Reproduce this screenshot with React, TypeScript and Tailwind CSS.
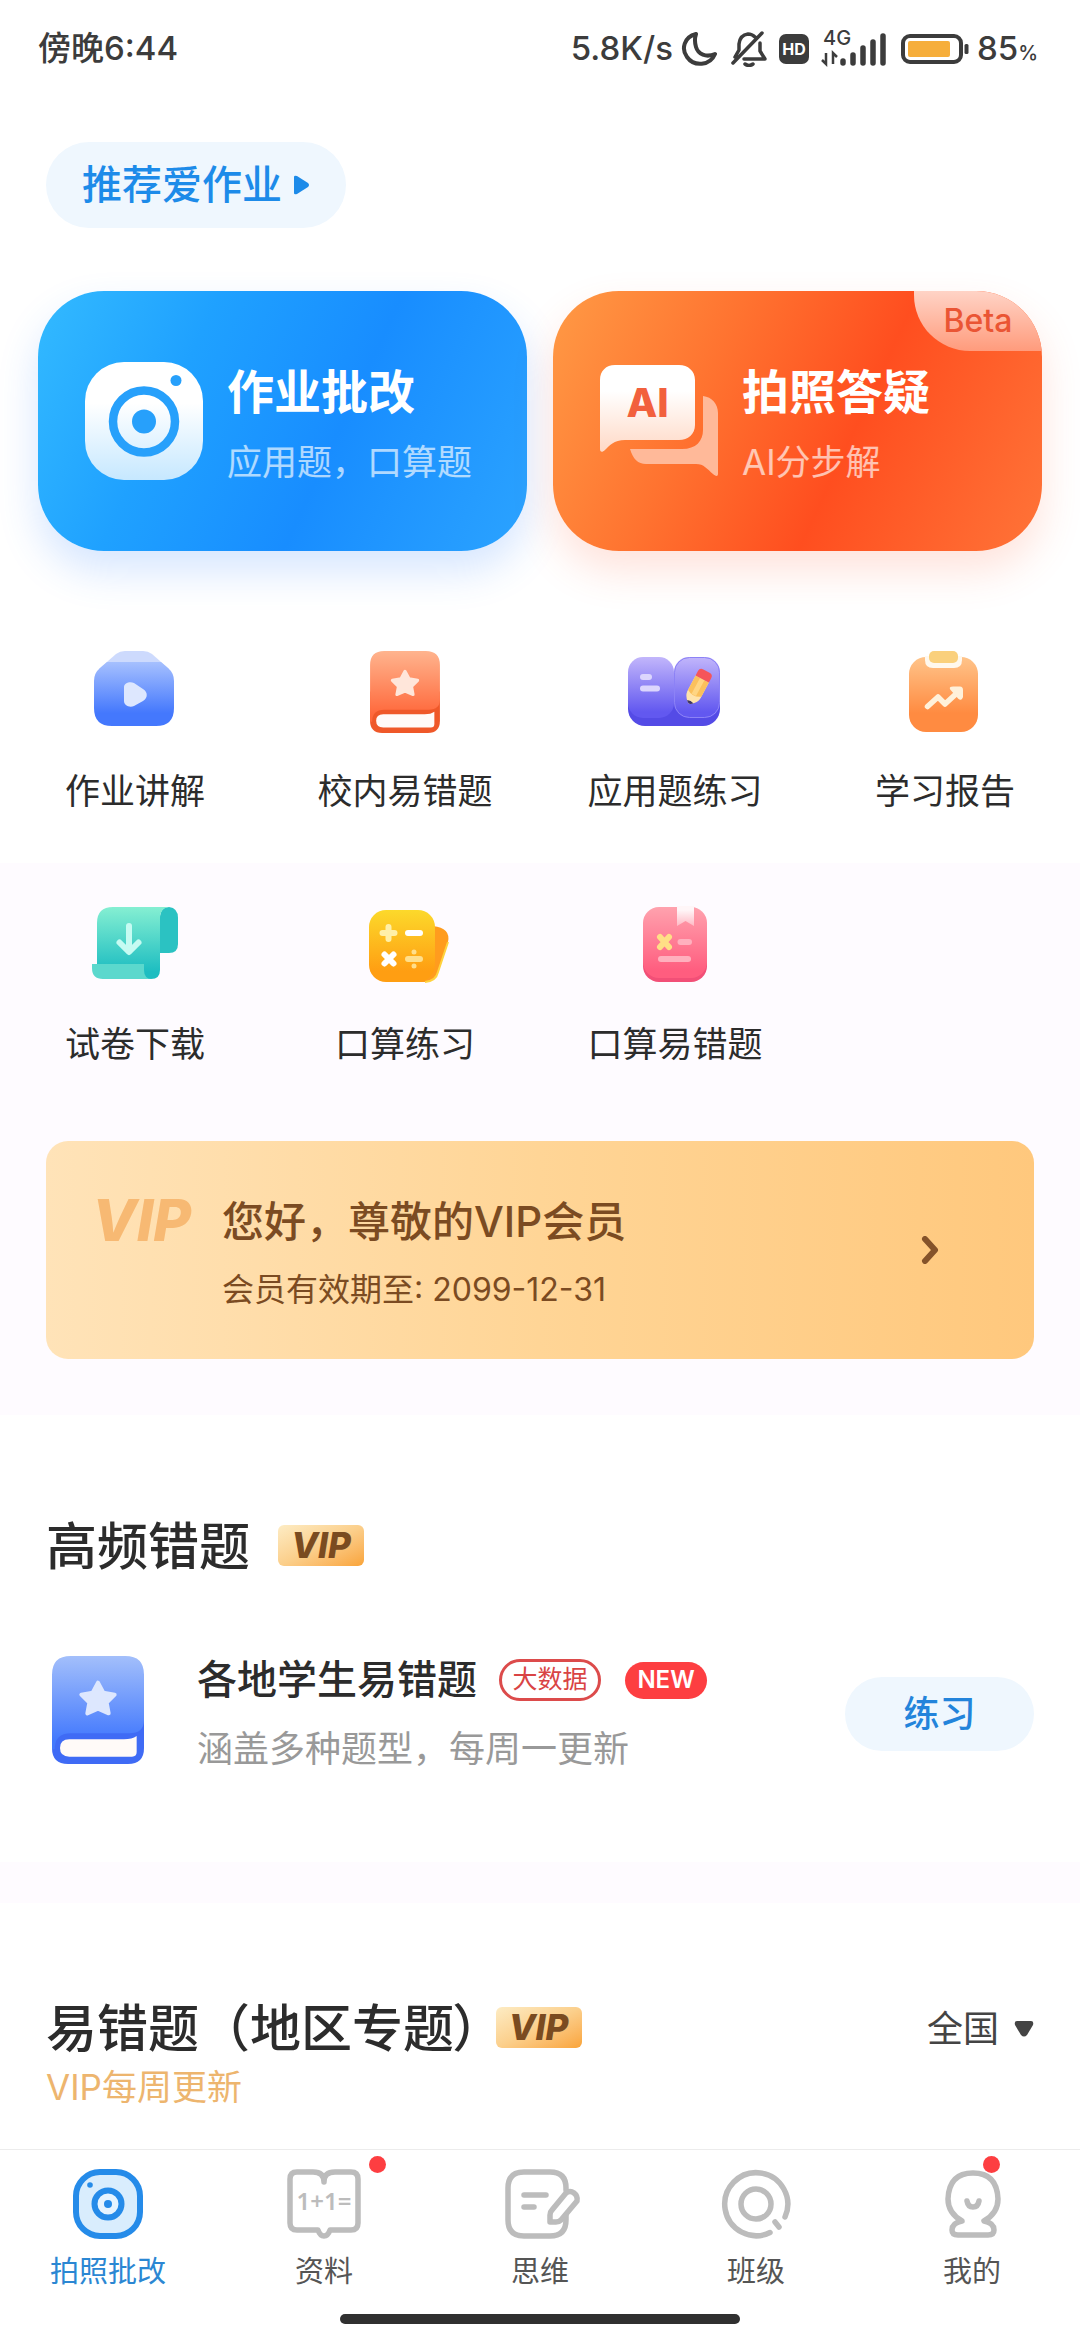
import { ReactNode } from "react";

function CameraIcon() {
  return (
    <svg className="w-[118px] h-[118px] shrink-0" viewBox="0 0 118 118">
      <defs>
        <linearGradient id="cam" x1="0" y1="0" x2="0" y2="1">
          <stop offset="0.35" stopColor="#ffffff" />
          <stop offset="1" stopColor="#c6e8ff" />
        </linearGradient>
      </defs>
      <rect width="118" height="118" rx="39" fill="url(#cam)" />
      <circle cx="59" cy="59.5" r="31" fill="none" stroke="#27a0fb" strokeWidth="8.5" />
      <circle cx="59" cy="59.5" r="12" fill="#27a0fb" />
      <circle cx="91" cy="18.5" r="5.5" fill="#27a0fb" />
    </svg>
  );
}

function AiIcon() {
  return (
    <svg className="w-[118px] h-[118px] shrink-0" viewBox="0 0 118 118">
      <defs>
        <linearGradient id="bubble" x1="0" y1="0" x2="0" y2="1">
          <stop offset="0.3" stopColor="#ffffff" />
          <stop offset="1" stopColor="#ffd9c6" />
        </linearGradient>
      </defs>
      <path d="M103 34C112 35 118 42 118 51V112C118 115 115 114 113 112C107 107 104 102 96 102H46C38 102 33 97 30 87H82C96 87 103 79 103 68Z" fill="#ffb999" />
      <path d="M15 3H79C88 3 95 9 95 18V63C95 72 88 78 79 78H25C14 78 9 84 5 88C2 91 0 90 0 87V18C0 9 6 3 15 3Z" fill="url(#bubble)" />
      <text x="47.5" y="55" textAnchor="middle" fontFamily="Inter" fontSize="40" fontWeight="800" fill="#f2603d">AI</text>
    </svg>
  );
}

function LessonIcon() {
  return (
    <svg className="w-24 h-[82px]" viewBox="0 0 96 82">
      <defs>
        <linearGradient id="lesson" x1="0" y1="0" x2="0" y2="1">
          <stop offset="0" stopColor="#a6c0fe" />
          <stop offset="0.8" stopColor="#4478fd" />
        </linearGradient>
      </defs>
      <path d="M29 3Q33 0 38 0H56Q61 0 65 3L82 18H12Z" fill="#cddafd" />
      <path d="M20 11H74L81 17Q87 22 87 30V57Q87 75 69 75H25Q7 75 7 57V30Q7 22 13 17Z" fill="url(#lesson)" />
      <path d="M37 36C37 32 43 30 47 32L56 38C61 41 61 47 56 50L47 55C42 57 37 54 37 50Z" fill="#dde7fe" />
    </svg>
  );
}

interface BookIconProps {
  id: string;
  className: string;
  top: string;
  bottom: string;
  edge: string;
  star: string;
}

function BookIcon({ id, className, top, bottom, edge, star }: BookIconProps) {
  return (
    <svg className={className} viewBox="0 0 69 81">
      <defs>
        <linearGradient id={id} x1="0" y1="0" x2="0" y2="1">
          <stop offset="0" stopColor={top} />
          <stop offset="0.9" stopColor={bottom} />
        </linearGradient>
      </defs>
      <path d="M0 66V40H69V69Q69 81 57 81H12Q0 81 0 69Z" fill={edge} />
      <path d="M14 0H55Q69 0 69 14V48Q69 58 58 58H14Q2 58 2 70H0V14Q0 0 14 0Z" fill={`url(#${id})`} />
      <path d="M13 62.500H54Q60 62.500 63.500 60V72Q63.500 75.500 60 75.500H13Q6 75.500 6 69T13 62.500Z" fill="#fffaf8" />
      <path d="M34.500 20L38.500 27.500L47 29L41 35L42.500 43L34.500 39.500L26.500 43L28 35L22 29L30.500 27.500Z" fill={star} stroke={star} strokeWidth="3" strokeLinejoin="round" />
    </svg>
  );
}

function ExerciseIcon() {
  return (
    <svg className="w-24 h-[82px]" viewBox="0 0 96 82">
      <defs>
        <linearGradient id="exercise" x1="0" y1="0" x2="0" y2="1">
          <stop offset="0" stopColor="#c2b6fb" />
          <stop offset="0.9" stopColor="#6258f0" />
        </linearGradient>
      </defs>
      <rect x="1" y="24" width="92" height="51" rx="17" fill="#544be6" />
      <rect x="1" y="6" width="46" height="61" rx="15" fill="url(#exercise)" />
      <rect x="47" y="6" width="46" height="61" rx="15" fill="url(#exercise)" />
      <rect x="47.500" y="6.500" width="45" height="60" rx="15" fill="none" stroke="#8c82f6" strokeWidth="1" />
      <rect x="13" y="23" width="12" height="6" rx="3" fill="#dcd6fd" />
      <rect x="13" y="34.500" width="20" height="6" rx="3" fill="#dcd6fd" />
      <g transform="translate(71 36) rotate(28)">
        <path d="M-7.500 -9V9Q-7 14 -2 18Q0 20 2 18Q7 14 7.500 9V-9Z" fill="#ffe3ac" />
        <path d="M-7.500 -9V7Q0 12 7.500 7V-9Z" fill="#fbc05c" />
        <path d="M-2.500 -9V9H2.500V-9Z" fill="#ffd583" />
        <path d="M-3.500 16.500Q0 21 3.500 16.500Q0 15 -3.500 16.500Z" fill="#3c3566" />
        <path d="M-7.500 -9V-14Q-7.500 -18 -3.500 -18H3.500Q7.500 -18 7.500 -14V-9Z" fill="#f5555a" />
      </g>
    </svg>
  );
}

function ReportIcon() {
  return (
    <svg className="w-24 h-[82px]" viewBox="0 0 96 82">
      <defs>
        <linearGradient id="report" x1="0" y1="0" x2="0" y2="1">
          <stop offset="0" stopColor="#ffc48a" />
          <stop offset="0.75" stopColor="#ff8b41" />
        </linearGradient>
      </defs>
      <rect x="12" y="6" width="69" height="75" rx="17" fill="url(#report)" />
      <path d="M28 5H65V9Q65 17 57 17H36Q28 17 28 9Z" fill="#fff8ee" />
      <rect x="32" y="0" width="29" height="12" rx="5" fill="#fad07c" />
      <path d="M30.500 55.500L41 46L48 53L60 42" fill="none" stroke="#fff1da" strokeWidth="5.500" strokeLinecap="round" strokeLinejoin="round" />
      <path d="M54 38Q53 36.500 56 36.500H63Q65 36.500 65 39V46Q64 49 62 47Z" fill="#fff1da" stroke="#fff1da" strokeWidth="2" />
    </svg>
  );
}

function DownloadIcon() {
  return (
    <svg className="w-24 h-[82px]" viewBox="0 0 96 82">
      <defs>
        <linearGradient id="paper" x1="0" y1="0" x2="0" y2="1">
          <stop offset="0" stopColor="#85efd2" />
          <stop offset="0.9" stopColor="#1dbdc1" />
        </linearGradient>
      </defs>
      <path d="M73 12Q74 3 82 3Q91 4 91 14V40Q91 49 82 49H73Z" fill="#2bc2c2" />
      <path d="M26 3H82Q73 4 73 14V66Q73 75 64 75H20Q10 75 10 66V19Q10 3 26 3Z" fill="url(#paper)" />
      <path d="M5 60H57V66Q57 75 65 75H16Q5 75 5 64Z" fill="#5bd8cd" />
      <path d="M42 22V46M32.500 38.500L42 48L51.500 38.500" fill="none" stroke="#c6fbf2" strokeWidth="6" strokeLinecap="round" strokeLinejoin="round" />
    </svg>
  );
}

function CalcIcon() {
  return (
    <svg className="w-24 h-[82px]" viewBox="0 0 96 82">
      <defs>
        <linearGradient id="calc" x1="0" y1="0" x2="0" y2="1">
          <stop offset="0" stopColor="#fcd92b" />
          <stop offset="0.85" stopColor="#ff9e12" />
        </linearGradient>
      </defs>
      <path d="M76 22Q94 24 91 38L81 68Q79 77 68 78H50V22Z" fill="#ff9c1e" />
      <path d="M91 38L81 68Q79 77 68 78" fill="none" stroke="#ffd23d" strokeWidth="2" />
      <rect x="12" y="6" width="66" height="72" rx="17" fill="url(#calc)" />
      <path d="M31.500 23V35M25.500 29H37.500" stroke="#fff0a8" strokeWidth="6" strokeLinecap="round" />
      <path d="M51 29H63" stroke="#ffffff" strokeWidth="6" strokeLinecap="round" />
      <path d="M27.500 50.500L36.500 59.500M36.500 50.500L27.500 59.500" stroke="#ffffff" strokeWidth="6" strokeLinecap="round" />
      <path d="M51 55H63" stroke="#ffdf8c" strokeWidth="6" strokeLinecap="round" />
      <circle cx="57" cy="48" r="2.500" fill="#ffdf8c" />
      <circle cx="57" cy="62" r="2.500" fill="#ffdf8c" />
    </svg>
  );
}

function MistakeIcon() {
  return (
    <svg className="w-24 h-[82px]" viewBox="0 0 96 82">
      <defs>
        <linearGradient id="mistake" x1="0" y1="0" x2="0" y2="1">
          <stop offset="0" stopColor="#ffa2ae" />
          <stop offset="0.9" stopColor="#ff5d7f" />
        </linearGradient>
        <linearGradient id="ribbon" x1="0" y1="0" x2="0" y2="1">
          <stop offset="0.2" stopColor="#fff6f8" />
          <stop offset="1" stopColor="#ffb9c4" />
        </linearGradient>
      </defs>
      <rect x="16" y="20" width="64" height="58" rx="16" fill="#f24f77" />
      <rect x="16" y="3" width="64" height="71" rx="16" fill="url(#mistake)" />
      <path d="M50 2H67V22L58.500 17L50 22Z" fill="url(#ribbon)" />
      <path d="M33 33L42 43M42 33L33 43" stroke="#ffdf86" strokeWidth="6" strokeLinecap="round" />
      <path d="M53.500 38H62" stroke="#ffb0be" strokeWidth="6" strokeLinecap="round" />
      <path d="M34 55H61" stroke="#ffb0be" strokeWidth="6" strokeLinecap="round" />
    </svg>
  );
}

function VipBadge() {
  return (
    <span className="flex items-center justify-center w-[86px] h-[41px] mb-1 rounded-md bg-linear-to-br from-[#fdecc4] via-[#fbcf8b] to-[#f9a437] text-[35px] leading-none font-extrabold italic text-[#7a4b20]">
      VIP
    </span>
  );
}

function StatusBar() {
  return (
    <div className="flex items-center justify-between h-[98px] pl-[38px] pr-[42px] text-[33px] font-medium text-[#3c3c3c]">
      <div>傍晚6:44</div>
      <div className="flex items-center">
        <span>5.8K/s</span>
        <svg className="w-[36px] h-[36px] ml-2" viewBox="0 0 36 36">
          <path d="M15 3C3 6 0 18 6 26C13 36 29 35 34 23C25 27 17 23 15 16C13.500 11 14 6 15 3Z" fill="none" stroke="#3c3c3c" strokeWidth="4" strokeLinejoin="round" />
        </svg>
        <svg className="w-[36px] h-[36px] ml-[14px]" viewBox="0 0 36 36" fill="none" stroke="#3c3c3c" strokeWidth="3.500" strokeLinecap="round" strokeLinejoin="round">
          <path d="M24 6Q21 3 17 3Q9 4 8 13V19L4 26M13 28H34L29 20V12M31 2L2 32" />
          <path d="M14 33Q18 36 22 33" />
        </svg>
        <svg className="w-[30px] h-[30px] ml-3" viewBox="0 0 30 30">
          <rect width="30" height="30" rx="7" fill="#3c3c3c" />
          <text x="15" y="20.500" textAnchor="middle" fontFamily="Inter" fontSize="16" fontWeight="700" fill="#ffffff">HD</text>
        </svg>
        <svg className="w-[66px] h-12 ml-3" viewBox="0 0 66 48">
          <text x="2" y="20" fontFamily="Inter" fontSize="20" fontWeight="500" fill="#3c3c3c">4G</text>
          <path d="M5 28V39L1 35M12 39V28L16 32" fill="none" stroke="#3c3c3c" strokeWidth="2.500" />
          <path d="M22 36V38M32 30V38M42 23V38M52 17V38M62 11V38" stroke="#3c3c3c" strokeWidth="5.500" strokeLinecap="round" />
        </svg>
        <svg className="w-[68px] h-[30px] ml-[14px]" viewBox="0 0 68 30">
          <rect x="2" y="2" width="58" height="26" rx="7" fill="none" stroke="#3c3c3c" strokeWidth="4" />
          <rect x="7" y="7" width="42" height="16" rx="2" fill="#f6ae3b" />
          <rect x="63.500" y="10" width="4" height="10" rx="1.500" fill="#3c3c3c" />
        </svg>
        <span className="ml-2">85<span className="text-[20px]">%</span></span>
      </div>
    </div>
  );
}

interface EntryProps {
  label: string;
  children: ReactNode;
}

function Entry({ label, children }: EntryProps) {
  return (
    <button className="flex flex-col items-center cursor-pointer">
      {children}
      <span className="mt-[38px] text-[35px] leading-10 text-[#2c2c2c]">{label}</span>
    </button>
  );
}

interface TabProps {
  label: string;
  active?: boolean;
  children: ReactNode;
}

function Tab({ label, active, children }: TabProps) {
  return (
    <a href="#" className={`flex flex-col items-center pt-[18px] text-[29px] leading-10 ${active ? "text-[#2b87d3]" : "text-[#555555]"}`}>
      <span className="relative">{children}</span>
      <span className="mt-3">{label}</span>
    </a>
  );
}

export default function App() {
  return (
    <div className="flex flex-col min-h-screen bg-white font-['Inter','Noto_Sans_CJK_SC',sans-serif]">
      <StatusBar />
      <header className="px-[38px]">
        <button className="flex items-center gap-3 h-[86px] mt-11 ml-2 px-9 rounded-full bg-[#eff7fe] text-[40px] font-medium text-[#1d8be9] cursor-pointer">
          推荐爱作业
          <svg className="w-4 h-5" viewBox="0 0 16 20">
            <path d="M0 2Q0 0 3 1L14 8Q16 10 14 12L3 19Q0 20 0 18Z" fill="#1d8be9" />
          </svg>
        </button>
        <div className="grid grid-cols-2 gap-[26px] mt-[63px]">
          <button className="flex items-center gap-6 h-[260px] pl-[47px] rounded-[66px] bg-[linear-gradient(115deg,#33baff_0%,#1fa1ff_30%,#188dff_60%,#2ba3ff_100%)] shadow-[0_20px_40px_rgba(50,130,255,0.2)] text-left text-white cursor-pointer">
            <CameraIcon />
            <span className="flex flex-col gap-[14px] pt-2">
              <span className="text-[47px] leading-[60px] font-bold">作业批改</span>
              <span className="text-[35px] leading-[52px] text-white/65">应用题，口算题</span>
            </span>
          </button>
          <button className="relative flex items-center gap-6 h-[260px] pl-[47px] rounded-[66px] overflow-hidden bg-[linear-gradient(115deg,#ff9a45_0%,#ff7330_32%,#ff4e1f_60%,#ff7438_100%)] shadow-[0_20px_40px_rgba(255,100,60,0.18)] text-left text-white cursor-pointer">
            <AiIcon />
            <span className="flex flex-col gap-[14px] pt-2">
              <span className="text-[47px] leading-[60px] font-bold">拍照答疑</span>
              <span className="text-[35px] leading-[52px] text-white/65">AI分步解</span>
            </span>
            <span className="absolute top-0 right-0 flex items-center justify-center w-32 h-[60px] rounded-bl-[56px] bg-linear-to-b from-[#ffd3c6] to-[#ff9b7c] text-[32px] font-medium text-[#ea5534]">
              Beta
            </span>
          </button>
        </div>
      </header>

      <div className="grid grid-cols-4 pt-[100px] pb-[52px]">
        <Entry label="作业讲解"><LessonIcon /></Entry>
        <Entry label="校内易错题">
          <BookIcon id="bookOrange" className="w-[70px] h-[82px]" top="#ffb48e" bottom="#ff683b" edge="#ef5829" star="#ffe6da" />
        </Entry>
        <Entry label="应用题练习"><ExerciseIcon /></Entry>
        <Entry label="学习报告"><ReportIcon /></Entry>
      </div>

      <div className="pt-[41px] pb-14 bg-[#fefbff]">
        <div className="grid grid-cols-4">
          <Entry label="试卷下载"><DownloadIcon /></Entry>
          <Entry label="口算练习"><CalcIcon /></Entry>
          <Entry label="口算易错题"><MistakeIcon /></Entry>
        </div>
        <button className="flex items-center w-[calc(100%-92px)] h-[218px] mx-[46px] mt-[77px] pl-[46px] pr-[94px] rounded-[22px] bg-linear-to-r from-[#ffe3b8] via-[#ffd596] to-[#ffc87d] text-left text-[#7b4b22] cursor-pointer">
          <span className="self-start w-[130px] mt-[52px] text-[58px] leading-[54px] font-extrabold italic text-[#f7b973]">VIP</span>
          <span className="flex flex-col flex-1 gap-5 pt-2">
            <span className="text-[42px] leading-[52px] font-medium">您好，尊敬的VIP会员</span>
            <span className="text-[32px] leading-[44px]">会员有效期至: 2099-12-31</span>
          </span>
          <svg className="w-5 h-7" viewBox="0 0 20 28">
            <path d="M5 3L15 14L5 25" fill="none" stroke="#85532a" strokeWidth="6" strokeLinecap="round" strokeLinejoin="round" />
          </svg>
        </button>
      </div>

      <section className="px-[46px] pt-[102px] pb-[91px]">
        <div className="flex items-center gap-7">
          <h2 className="text-[51px] leading-[60px] font-medium text-[#2c2c2c]">高频错题</h2>
          <VipBadge />
        </div>
        <div className="flex items-start mt-[79px]">
          <BookIcon id="bookBlue" className="w-[92px] h-[108px] ml-[6px]" top="#a3bffb" bottom="#4379fd" edge="#3f6bf5" star="#dde7fe" />
          <div className="flex-1 ml-[53px]">
            <div className="flex items-center">
              <h3 className="text-[40px] leading-[48px] font-medium text-[#2c2c2c]">各地学生易错题</h3>
              <span className="flex items-center justify-center w-[102px] h-[42px] ml-[22px] rounded-full border-3 border-[#dc4b4b] text-[25px] text-[#d94444]">大数据</span>
              <span className="flex items-center justify-center w-[82px] h-[37px] ml-6 rounded-full bg-[#fd3e41] text-[24px] font-semibold text-white">NEW</span>
            </div>
            <p className="mt-[23px] text-[36px] leading-[44px] text-[#999999]">涵盖多种题型，每周一更新</p>
          </div>
          <button className="self-center w-[189px] h-[74px] rounded-full bg-[#eff7fe] text-[36px] font-medium text-[#2384db] cursor-pointer">练习</button>
        </div>
      </section>

      <section className="px-[46px] pt-24 pb-10 border-t-[41px] border-[#fefbff]">
        <div className="flex items-center">
          <h2 className="text-[51px] leading-[60px] font-medium text-[#2c2c2c]">
            易错题（地区专题<span className="[font-feature-settings:'palt']">）</span>
          </h2>
          <div className="ml-4"><VipBadge /></div>
          <div className="flex items-center gap-[14px] ml-auto">
            <select aria-label="地区" className="appearance-none bg-transparent text-[36px] leading-[44px] text-[#444444]">
              <option>全国</option>
            </select>
            <svg className="w-5 h-4" viewBox="0 0 20 16">
              <path d="M3 0H17Q20 0 19 4L13 14Q10 17 7 14L1 4Q0 0 3 0Z" fill="#444444" />
            </svg>
          </div>
        </div>
        <p className="mt-[6px] text-[35px] leading-[44px] text-[#edb56e]">VIP每周更新</p>
      </section>

      <nav className="sticky bottom-0 mt-auto border-t border-[#ececec] bg-white">
        <div className="grid grid-cols-5">
          <Tab label="拍照批改" active>
            <svg className="w-[76px] h-[72px]" viewBox="0 0 76 72">
              <rect x="6" y="4" width="64" height="64" rx="24" fill="#d9edfd" stroke="#258be9" strokeWidth="6" />
              <circle cx="38" cy="36" r="13.500" fill="#e6f4ff" stroke="#258be9" strokeWidth="6" />
              <circle cx="38" cy="36" r="4" fill="#258be9" />
              <circle cx="20" cy="17" r="2.800" fill="#258be9" />
            </svg>
          </Tab>
          <Tab label="资料">
            <svg className="w-[76px] h-[72px]" viewBox="0 0 76 72">
              <path d="M11 4H27Q38 4 38 14Q38 4 49 4H65Q72 4 72 11V55Q72 62 65 62H44Q42 68 38 68T32 62H11Q4 62 4 55V11Q4 4 11 4Z" fill="none" stroke="#bcbcbc" strokeWidth="5.500" strokeLinejoin="round" />
              <text x="38" y="42" textAnchor="middle" fontFamily="Noto Sans" fontSize="24" fontWeight="600" fill="#bcbcbc">1+1=</text>
            </svg>
            <span className="absolute -top-3 -right-6 size-[17px] rounded-full bg-[#fd3e41]" />
          </Tab>
          <Tab label="思维">
            <svg className="w-[76px] h-[72px] overflow-visible" viewBox="0 0 76 72" fill="none" stroke="#bcbcbc" strokeWidth="5.500" strokeLinecap="round" strokeLinejoin="round">
              <path d="M64 22V20Q64 4 48 4H22Q6 4 6 20V52Q6 68 22 68H48Q64 68 64 52V47" />
              <path d="M22 27H44M22 39H32" />
              <path d="M64 25Q68 22 72 25T75 33L59 52Q57 54 54 54H48V47Q48 44 50 42Z" />
            </svg>
          </Tab>
          <Tab label="班级">
            <svg className="w-[76px] h-[72px]" viewBox="0 0 76 72" fill="none" stroke="#bcbcbc" strokeWidth="5.500" strokeLinecap="round">
              <path d="M67 49A31.500 31.500 0 1 0 52 64.500" />
              <circle cx="38" cy="36" r="15" />
              <path d="M57 54L61 59" />
            </svg>
          </Tab>
          <Tab label="我的">
            <svg className="w-[76px] h-[72px]" viewBox="0 0 76 72" fill="none" stroke="#bcbcbc" strokeWidth="5.500" strokeLinecap="round" strokeLinejoin="round">
              <path d="M28 53Q14 45 14 31Q15 5 39 5T64 31Q64 45 50 53Q60 55 60 62Q60 67 54 67H24Q18 67 18 62Q18 55 28 53Z" />
              <path d="M33 33Q34 39 39 39T45 33" />
            </svg>
            <span className="absolute -top-3 right-[10px] size-[17px] rounded-full bg-[#fd3e41]" />
          </Tab>
        </div>
        <div className="w-[400px] h-[10px] mx-auto mt-[22px] mb-4 rounded-full bg-[#303030]" />
      </nav>
    </div>
  );
}
